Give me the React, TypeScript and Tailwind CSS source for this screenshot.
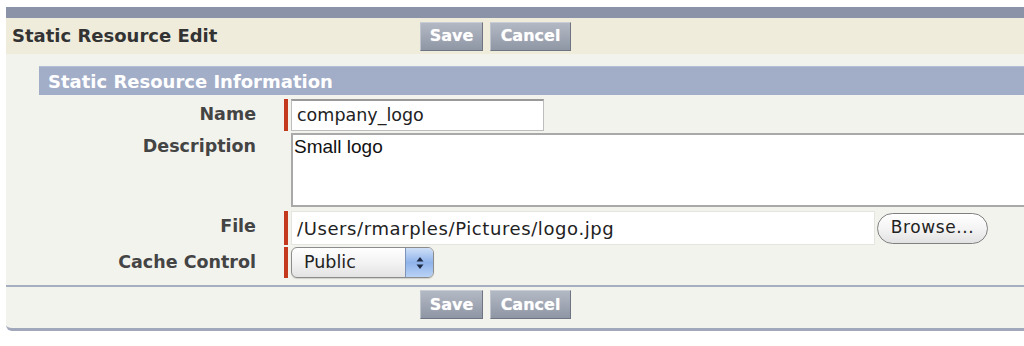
import React from "react";

const btn =
  "h-[29px] px-[9px] flex items-center justify-center text-white font-bold text-[16px] bg-gradient-to-b from-[#b3b9c4] to-[#8f96a4] border border-t-[#c9cdd5] border-l-[#c0c4cc] border-r-[#6e7481] border-b-[#6e7481] [text-shadow:0_0_1px_rgba(255,255,255,0.6)]";

function Buttons() {
  return (
    <div className="flex gap-[7px]">
      <div className={btn + " w-[63px]"}>Save</div>
      <div className={btn + " w-[81px]"}>Cancel</div>
    </div>
  );
}

function Req() {
  return <div className="w-[4px] self-stretch bg-[#c4391d]" />;
}

function Label({ children, pt = "pt-[4px]" }: { children: React.ReactNode; pt?: string }) {
  return (
    <div className={"w-[250px] shrink-0 text-right font-bold text-[17.5px] text-[#444] leading-[20px] " + pt}>
      {children}
    </div>
  );
}

export default function App() {
  return (
    <div
      className="w-[1024px] h-[346px] bg-white pt-[7px] pl-[6px] overflow-hidden"
      style={{ fontFamily: '"DejaVu Sans", Verdana, sans-serif' }}
    >
      <div className="h-[11px] bg-[#8a93a8]" />
      <div className="h-[36px] bg-[#f0ecdc] flex items-center">
        <div className="w-[414px] pl-[6px] pb-[1px] font-bold text-[18px] text-[#333]">Static Resource Edit</div>
        <Buttons />
      </div>
      <div className="bg-[#f3f3ee] rounded-bl-[6px] border-b-[3px] border-[#a1a8bc] pt-[12px] pb-[9px]">
        <div className="ml-[33px] h-[29px] bg-[#a2adc7] border-t border-[#b4bdd2] flex items-center pl-[9px] font-bold text-[18px] text-white">
          Static Resource Information
        </div>
        <div className="flex flex-col pt-[4px]">
          {/* Name */}
          <div className="flex h-[32px]">
            <Label pt="pt-[5px]">Name</Label>
            <div className="ml-[28px] flex gap-[3px]">
              <Req />
              <div className="w-[253px] h-[32px] bg-white border border-[#bdbdbd] border-t-[#9a9a9a] border-t-2 flex items-center pl-[5px] text-[17.5px] text-[#222]">
                company_logo
              </div>
            </div>
          </div>
          {/* Description */}
          <div className="flex h-[74px] mt-[2px]">
            <Label pt="pt-[3px]">Description</Label>
            <div className="ml-[35px] flex-1 h-[74px] bg-white border-2 border-[#a9a9a9] border-r-0 pl-[1px] pt-[1px] text-[19px] leading-[22px] text-[#111]" style={{ fontFamily: '"Liberation Sans", Arial, sans-serif' }}>
              Small logo
            </div>
          </div>
          {/* File */}
          <div className="flex h-[34px] mt-[4px]">
            <Label pt="pt-[5px]">File</Label>
            <div className="ml-[28px] flex gap-[3px] items-stretch">
              <Req />
              <div className="w-[584px] h-[34px] bg-white border border-[#e4e4e0] flex items-center pl-[5px] text-[18px] tracking-[0.6px] text-[#222]">
                /Users/rmarples/Pictures/logo.jpg
              </div>
              <div className="ml-[-1px] self-center w-[111px] h-[31px] rounded-full border-[1.5px] border-[#808080] bg-gradient-to-b from-white via-[#f4f4f4] to-[#e2e2e2] flex items-center justify-center text-[17px] tracking-[0.6px] text-[#222]">
                Browse...
              </div>
            </div>
          </div>
          {/* Cache Control */}
          <div className="flex h-[31px] mt-[2px]">
            <Label pt="pt-[5px]">Cache Control</Label>
            <div className="ml-[28px] flex gap-[3px]">
              <Req />
              <div className="w-[143px] h-[31px] rounded-[6px] border border-[#8c8c8c] bg-gradient-to-b from-white via-[#f3f3f3] to-[#e3e3e3] flex overflow-hidden shadow-[0_1px_1px_rgba(0,0,0,0.15)]">
                <div className="flex-1 flex items-center pl-[12px] text-[17.5px] text-[#222]">Public</div>
                <div className="w-[28px] bg-gradient-to-b from-[#cfe0f7] via-[#8fb3ea] to-[#b9d2f5] border-l border-[#7d93b8] flex items-center justify-center">
                  <svg width="8" height="14" viewBox="0 0 8 14">
                    <path d="M4 1 L7.5 5.5 H0.5 Z" fill="#1c2a44" />
                    <path d="M4 13 L7.5 8.5 H0.5 Z" fill="#1c2a44" />
                  </svg>
                </div>
              </div>
            </div>
          </div>
        </div>
        <div className="mt-[7px] border-t-2 border-[#a6aec2]" />
        <div className="pt-[3px] pl-[414px]">
          <Buttons />
        </div>
      </div>
    </div>
  );
}
